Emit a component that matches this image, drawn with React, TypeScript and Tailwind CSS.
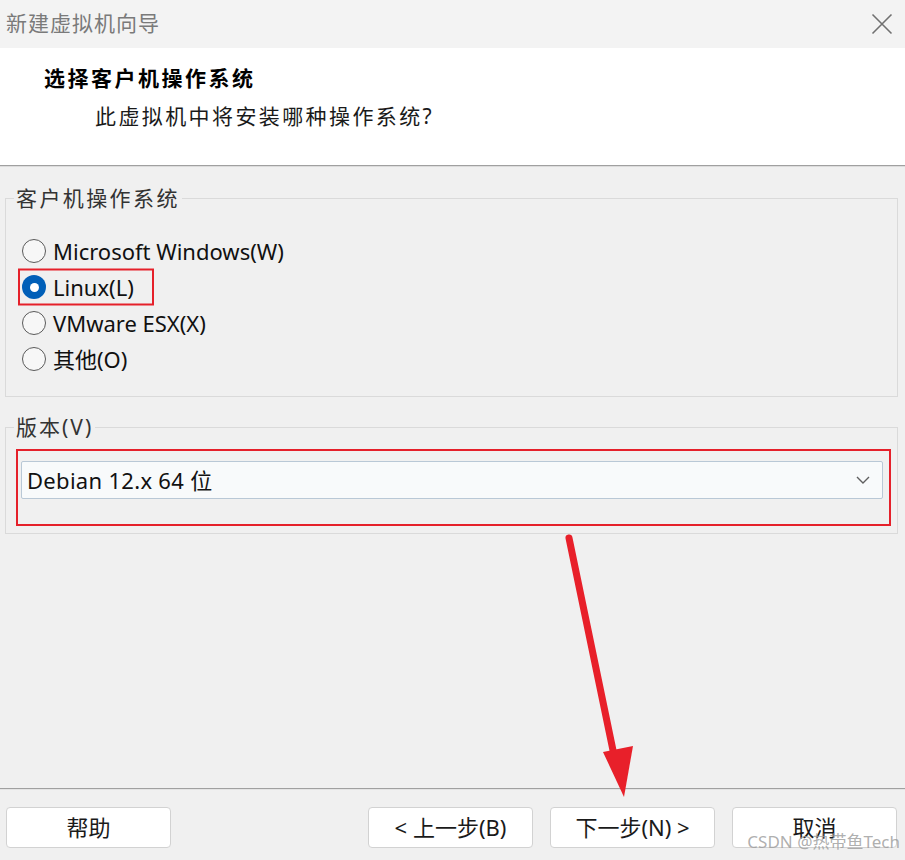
import { useState } from 'react';

const OS_OPTIONS = [
  { id: 'windows', label: 'Microsoft Windows(W)' },
  { id: 'linux', label: 'Linux(L)' },
  { id: 'esx', label: 'VMware ESX(X)' },
  { id: 'other', label: '其他(O)' },
];

const FONT = "font-['Noto_Sans','Noto_Sans_CJK_SC',sans-serif]";

function Radio({ checked }: { checked: boolean }) {
  if (checked) {
    return (
      <span className="w-[24px] h-[24px] rounded-full bg-[#005fb8] flex items-center justify-center shrink-0">
        <span className="w-[9px] h-[9px] rounded-full bg-white" />
      </span>
    );
  }
  return <span className="w-[24px] h-[24px] rounded-full border-[1.5px] border-[#5a5a5a] bg-[#f7f7f7] shrink-0" />;
}

function WizardButton({ children }: { children: React.ReactNode }) {
  return (
    <button className="w-[165px] h-[41px] bg-white border border-[#d2d2d2] rounded-[4px] text-[22px] text-[#1a1a1a] flex items-center justify-center">
      {children}
    </button>
  );
}

export default function App() {
  const [os, setOs] = useState('linux');

  return (
    <div className={`relative w-[905px] h-[860px] bg-[#f0f0f0] flex flex-col overflow-hidden ${FONT}`}>
      {/* Title bar */}
      <div className="h-[48px] bg-[#f3f3f3] flex items-center justify-between pl-[6px] pr-[12px] shrink-0">
        <span className="text-[21px] text-[#7a7a7a] tracking-[1px]">新建虚拟机向导</span>
        <svg width="22" height="22" viewBox="0 0 22 22" fill="none" stroke="#707070" strokeWidth="1.6">
          <path d="M1.5 1.5l19 19M20.5 1.5l-19 19" />
        </svg>
      </div>

      {/* Page header */}
      <div className="h-[117px] bg-white pl-[44px] pt-[14px] shrink-0">
        <div className="text-[21px] font-bold text-black tracking-[2.5px] leading-[32px]">选择客户机操作系统</div>
        <div className="ml-[51px] mt-[6px] text-[21px] text-[#1a1a1a] tracking-[2.4px] leading-[32px]">此虚拟机中将安装哪种操作系统?</div>
      </div>
      <div className="h-px bg-[#a0a0a0] shrink-0" />
      <div className="h-px bg-[#dcdcdc] shrink-0" />

      <div className="px-[5px] pr-[7px] pt-[16px] flex flex-col gap-[15px]">
        {/* Guest OS */}
        <fieldset className="border border-[#dadada] pl-[16px] pt-[20px] pb-[19px]">
          <legend className="ml-[-8px] px-[2px] text-[21px] text-[#333] tracking-[2.4px] leading-[30px]">客户机操作系统</legend>
          {OS_OPTIONS.map(o => (
            <div key={o.id} className="h-[36px] flex items-center">
              <label className="relative flex items-center gap-[7px] cursor-pointer" onClick={() => setOs(o.id)}>
                <Radio checked={os === o.id} />
                <span className="text-[22px] text-[#111] leading-[30px]">{o.label}</span>
                {o.id === 'linux' && (
                  <span className="absolute left-[-4px] top-1/2 -translate-y-1/2 w-[136px] h-[37px] border-2 border-[#e5202a]" />
                )}
              </label>
            </div>
          ))}
        </fieldset>

        {/* Version */}
        <fieldset className="border border-[#dadada] pl-[10px] pr-[6px] pt-[7px] pb-[7px]">
          <legend className="ml-[-2px] px-[2px] text-[21px] text-[#333] tracking-[2px] leading-[30px]">版本(V)</legend>
          <div className="border-2 border-[#e5202a] pl-[3px] pr-[6px] pt-[10px] pb-[25px]">
            <div className="h-[38px] bg-[#f8fafb] border border-[#b9c8d6] rounded-[2px] flex items-center justify-between pl-[5px] pr-[12px]">
              <span className="text-[22px] text-[#111] tracking-[0.3px]">Debian 12.x 64 位</span>
              <svg width="14" height="8" viewBox="0 0 14 8" fill="none" stroke="#5f5f5f" strokeWidth="1.4">
                <path d="M1 1l6 6 6-6" />
              </svg>
            </div>
          </div>
        </fieldset>
      </div>

      <div className="flex-1" />

      {/* Footer */}
      <div className="h-px bg-[#a0a0a0] shrink-0" />
      <div className="h-px bg-[#e4e4e4] shrink-0" />
      <div className="h-[70px] pt-[17px] pl-[6px] pr-[8px] flex items-start shrink-0">
        <WizardButton>帮助</WizardButton>
        <div className="flex-1" />
        <div className="flex gap-[17px]">
          <WizardButton>&lt; 上一步(B)</WizardButton>
          <WizardButton>下一步(N) &gt;</WizardButton>
          <WizardButton>取消</WizardButton>
        </div>
      </div>

      {/* Annotation arrow */}
      <svg className="absolute left-0 top-0 pointer-events-none" width="905" height="860" viewBox="0 0 905 860">
        <path d="M569 538L615 760" stroke="#e8202a" strokeWidth="7" strokeLinecap="round" />
        <path d="M603 752L633 746L624 797Z" fill="#e8202a" />
      </svg>

      <span className="absolute right-[5px] bottom-[6px] text-[17px] text-[#9a9a9a]/80 pointer-events-none">CSDN @热带鱼Tech</span>
    </div>
  );
}
